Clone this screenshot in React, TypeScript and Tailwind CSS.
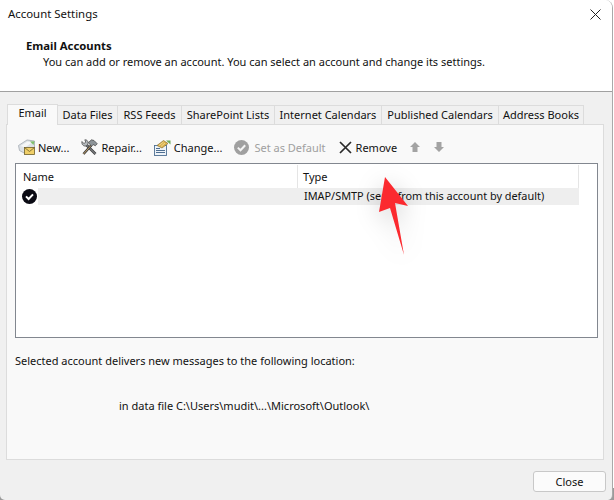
const font = "font-['Noto_Sans',sans-serif]"

const tabs = [
  { label: "Email", w: "w-[51px]" },
  { label: "Data Files", w: "w-[60px]" },
  { label: "RSS Feeds", w: "w-[64px]" },
  { label: "SharePoint Lists", w: "w-[93px]" },
  { label: "Internet Calendars", w: "w-[107px]" },
  { label: "Published Calendars", w: "w-[117px]" },
  { label: "Address Books", w: "w-[85px]" },
]

function MailIcon() {
  return (
    <svg width="18" height="18" viewBox="0 0 18 18" className="shrink-0">
      <path d="M0.5 7.5 L9 2 L16.5 3 L16.5 9 L7 15.5 L1.5 12.5 Z" fill="#dde2e6" stroke="#a3abb2" strokeWidth="0.8" />
      <path d="M2.5 8 L9.5 3.5 L14 4.5 L7 9.5 Z" fill="#f5f7f8" />
      <path d="M12 3.5 L16.5 3.2 L15.5 7 Z" fill="#7fbf6a" />
      <rect x="6.5" y="9.5" width="10" height="7" fill="#f0cf68" stroke="#6f5f2a" strokeWidth="0.8" />
      <path d="M6.5 9.5 L11.5 13.5 L16.5 9.5" fill="none" stroke="#6f5f2a" strokeWidth="0.8" />
    </svg>
  )
}

function RepairIcon() {
  return (
    <svg width="17" height="17" viewBox="0 0 17 17" className="shrink-0">
      {/* wrench */}
      <path d="M5.5 6 L14.5 15" stroke="#3f3f3f" strokeWidth="2.6" />
      <path d="M5.5 6 L14.5 15" stroke="#a8adb2" strokeWidth="0.9" />
      <path d="M0.8 2.5 L3 4.5 L4.8 3.2 L3.8 0.8 C6.3 0.5 7.8 3 6.8 5.5 L5 7 C2.5 7.5 0.5 5.5 0.8 2.5 Z" fill="#b4b9bd" stroke="#3f3f3f" strokeWidth="0.7" />
      {/* hammer */}
      <path d="M2.5 15 L10.5 6" stroke="#3f3f3f" strokeWidth="2.6" />
      <path d="M2.5 15 L10.5 6" stroke="#c9a56a" strokeWidth="0.9" />
      <path d="M7.5 3.5 L10.5 0.8 L13 1.5 L16.3 4.8 L14.3 6.8 L12 5.5 L10.5 7.5 Z" fill="#8d9499" stroke="#3f3f3f" strokeWidth="0.7" />
    </svg>
  )
}

function ChangeIcon() {
  return (
    <svg width="17" height="17" viewBox="0 0 17 17" className="shrink-0">
      <rect x="0.5" y="6.5" width="12" height="10" fill="#eef3f8" stroke="#4f6f92" strokeWidth="0.9" />
      <path d="M2 9.5 H6 M2 11.5 H11 M2 13.5 H11" stroke="#4f6f92" strokeWidth="1" />
      <path d="M3 6.5 L9.5 1.5 L14 4.5 L8 9 Z" fill="#dcb44f" stroke="#8a7030" strokeWidth="0.7" />
      <path d="M5 6.5 L9.5 3 M7 7.5 L11 4" stroke="#f3e2a8" strokeWidth="0.7" />
      <path d="M12 1.5 H16.5 V5.5 Z" fill="#6eaa5a" />
    </svg>
  )
}

function DefaultIcon() {
  return (
    <svg width="15" height="15" viewBox="0 0 15 15" className="shrink-0">
      <circle cx="7.5" cy="7.5" r="7.5" fill="#a0a0a0" />
      <path d="M3.8 7.6 L6.5 10.3 L11.2 5.2" fill="none" stroke="#f4f4f4" strokeWidth="2" />
    </svg>
  )
}

function RemoveIcon() {
  return (
    <svg width="13" height="13" viewBox="0 0 13 13" className="shrink-0">
      <path d="M1 1 L12 12 M12 1 L1 12" stroke="#2a2a2a" strokeWidth="1.7" />
    </svg>
  )
}

function ArrowIcon({ down }: { down?: boolean }) {
  return (
    <svg width="10" height="10" viewBox="0 0 10 10" className="shrink-0">
      <path d={down ? "M2.5 0 H7.5 V5 H10 L5 10 L0 5 H2.5 Z" : "M5 0 L10 5 H7.5 V10 H2.5 V5 H0 Z"} fill="#a3a3a3" />
    </svg>
  )
}

function ToolItem({ icon, label, gap, className }: { icon: React.ReactNode; label: string; gap: string; className?: string }) {
  return (
    <div className={`flex items-center ${gap} ${className ?? ""}`}>
      {icon}
      <span>{label}</span>
    </div>
  )
}

export default function App() {
  return (
    <div className={`${font} w-[614px] h-[500px] bg-[linear-gradient(to_bottom,#fff_488px,#9a9a9a_488px)] text-[11px] leading-none text-[#111] relative overflow-hidden`}>
      <div className="w-[613px] h-[500px] flex flex-col rounded-t-lg rounded-b-[5px] border-r border-[#a9a9a9] overflow-hidden">
        {/* Title + header */}
        <div className="h-[92px] shrink-0 bg-white border-b border-[#a0a0a0] flex flex-col">
          <div className="flex items-center justify-between h-[28px] pl-2 pr-[11px]">
            <span className="text-[11.4px]">Account Settings</span>
            <svg width="11" height="11" viewBox="0 0 11 11">
              <path d="M0.5 0.5 L10.5 10.5 M10.5 0.5 L0.5 10.5" stroke="#222" strokeWidth="1" />
            </svg>
          </div>
          <div className="pl-[26px] pt-[12px] font-bold text-[11.3px]">Email Accounts</div>
          <div className="pl-[43px] pt-[5px]">You can add or remove an account. You can select an account and change its settings.</div>
        </div>

        {/* Tab area */}
        <div className="flex-1 bg-[#f0f0f0] flex flex-col min-h-0">
          <div className="flex items-end h-[32px] pl-[7px] shrink-0">
            {tabs.map((t, i) => (
              <div
                key={t.label}
                className={
                  i === 0
                    ? `${t.w} h-[21px] bg-[#f9f9f9] border border-b-0 border-[#dcdcdc] flex items-center justify-center -mb-px relative pb-[5px]`
                    : `${t.w} h-[19px] bg-[#f0f0f0] border-t border-r border-[#dcdcdc] flex items-center justify-center pb-[2px]`
                }
              >
                {t.label}
              </div>
            ))}
          </div>
          <div className="mx-[6px] w-[598px] h-[336px] shrink-0 bg-[#f9f9f9] border border-[#dcdcdc] pl-[8px] flex flex-col">
            {/* Toolbar */}
            <div className="h-[38px] shrink-0 flex items-center pl-[3px] pt-[6px]">
              <ToolItem icon={<MailIcon />} label="New..." gap="gap-[2px]" />
              <ToolItem icon={<RepairIcon />} label="Repair..." gap="gap-[3px]" className="ml-[12px]" />
              <ToolItem icon={<ChangeIcon />} label="Change..." gap="gap-[3px]" className="ml-[12px]" />
              <ToolItem icon={<DefaultIcon />} label="Set as Default" gap="gap-[5px]" className="ml-[12px] text-[#a0a0a0]" />
              <ToolItem icon={<RemoveIcon />} label="Remove" gap="gap-[4px]" className="ml-[13px]" />
              <div className="ml-[13px]"><ArrowIcon /></div>
              <div className="ml-[14px]"><ArrowIcon down /></div>
            </div>

            {/* Account list */}
            <div className="w-[583px] h-[175px] shrink-0 bg-white border border-[#82878f]">
              <div className="flex h-[24px] pt-px">
                <div className="w-[282px] border-r border-[#e5e5e5] flex items-center pl-[7px]">Name</div>
                <div className="w-[281px] border-r border-[#e5e5e5] flex items-center pl-[5px]">Type</div>
              </div>
              <div className="flex items-center h-[17px] pl-[6px]">
                <svg width="15" height="15" viewBox="0 0 15 15" className="shrink-0">
                  <circle cx="7.5" cy="7.5" r="7.5" fill="#0b0b14" />
                  <path d="M4 7.4 L6.6 10 L11 5.4" fill="none" stroke="#fff" strokeWidth="2" />
                </svg>
                <div className="ml-px w-[541px] h-[17px] bg-[#eeeeee] flex items-center pl-[266px] whitespace-nowrap text-[10.9px]">
                  IMAP/SMTP (send from this account by default)
                </div>
              </div>
            </div>

            <div className="pt-[17px]">Selected account delivers new messages to the following location:</div>
            <div className="pt-[34px] pl-[104px]">in data file C:\Users\mudit\...\Microsoft\Outlook\</div>
          </div>
          <div className="flex justify-end pt-[11px] pr-[6px]">
            <button className="w-[73px] h-[21px] bg-[#fbfbfb] border border-[#c8c8c8] rounded-[3px] flex items-center justify-center">Close</button>
          </div>
        </div>
      </div>

      {/* Annotation arrow */}
      <svg width="70" height="100" viewBox="0 0 70 100" className="absolute left-[355px] top-[165px] drop-shadow-[0_4px_12px_rgba(0,0,0,0.2)]">
        <path d="M30 12 L53 41 L40 38 L49 90 L35 43 L24 47 Z" fill="#fb2a2f" />
      </svg>
    </div>
  )
}
